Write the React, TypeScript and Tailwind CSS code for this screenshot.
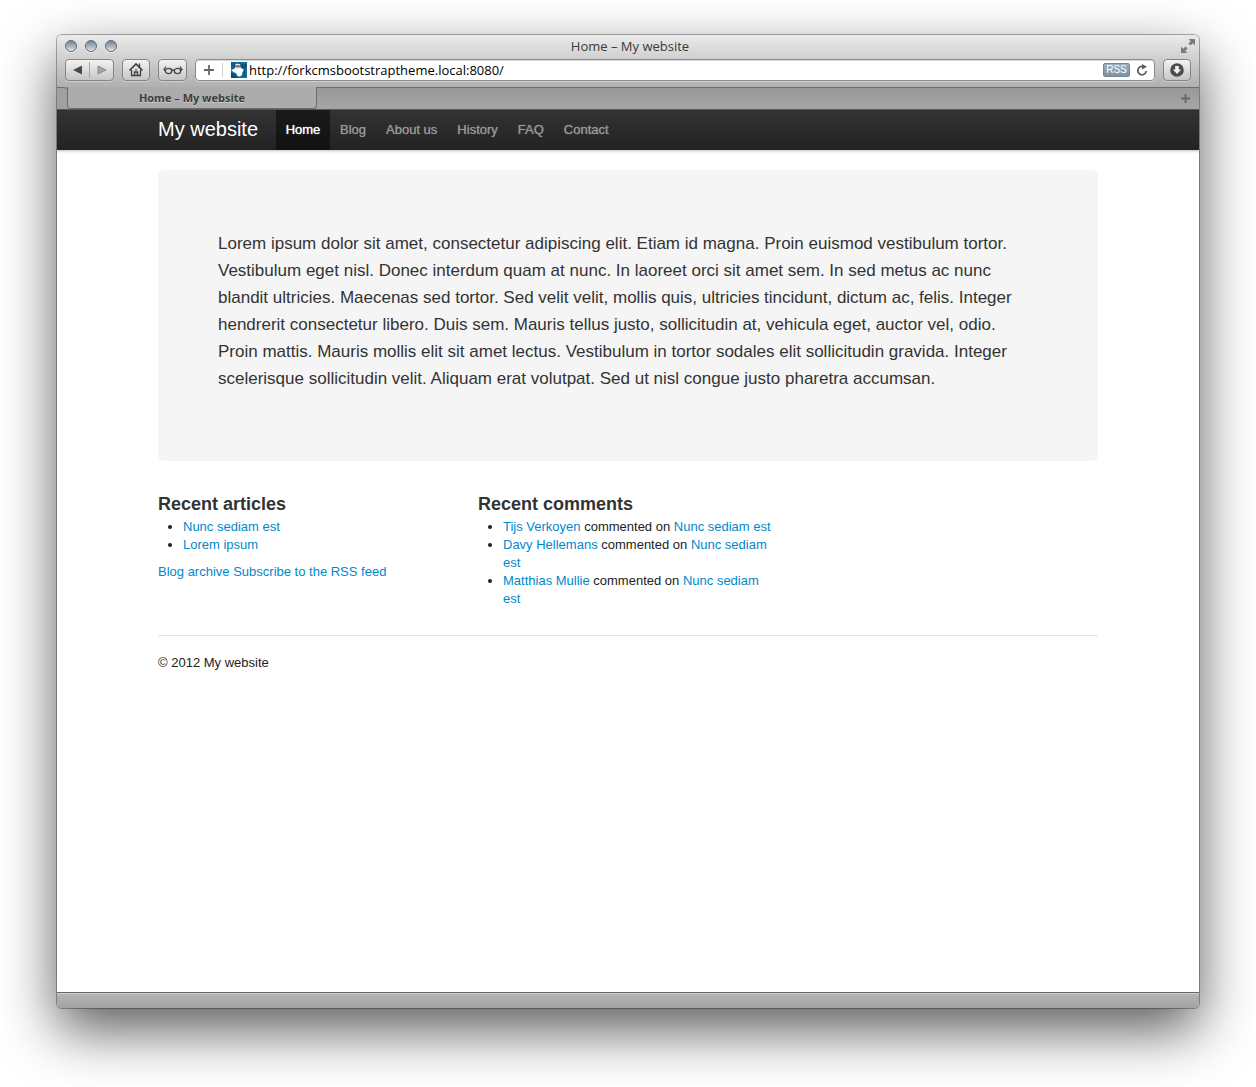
import type { ReactNode } from "react";

const SYSTEM_FONT = "font-['Lucida_Grande','Open_Sans',sans-serif]";

const toolButton =
  "flex h-[22px] items-center justify-center rounded-[4px] border border-[#858585] bg-linear-to-b from-[#f3f3f3] to-[#c6c6c6] shadow-[0_1px_0_rgba(255,255,255,0.35)]";

function WindowLight({ label }: { label: string }) {
  return (
    <button
      aria-label={label}
      className="size-3 rounded-full border border-[#626a72] bg-linear-to-b from-[#77838f] via-[#a4b0bb] to-[#dde8f0] shadow-[0_1px_0_rgba(255,255,255,0.6)]"
    />
  );
}

function ForkFavicon() {
  return (
    <svg width="16" height="16" viewBox="0 0 16 16" aria-hidden="true">
      <rect width="16" height="16" fill="#0a6c9f" />
      <path d="M0 0h4L2 4 0 7z" fill="#0c5e8a" />
      <path d="M2.500 4.500 4 2l3-1 3 1 1 2.500z" fill="#16304a" />
      <path d="M4 2.500 6 1.500 9 2l1 1.500H4z" fill="#dfeaf1" />
      <path d="M4 4.500h5.500v2H4z" fill="#e0aa90" />
      <path d="M0 8l3-1 1.500-1.500L7 6.500l3-1L11 7l2-.5v2L11.500 10l-.5 3-2 1.500L6.500 14 5 11 3 10.500z" fill="#fff" />
      <path d="M0 11l3 1 2 2 1 2H0z" fill="#064f78" />
      <path d="M11.500 2v3q0 1 1.500 1t1.500-1V2M13 2v12" stroke="#084a73" fill="none" />
    </svg>
  );
}

function TitleBar() {
  return (
    <div className="grid h-6 grid-cols-[1fr_auto_1fr] items-start pr-1 pl-2">
      <div className="flex gap-2 pt-[5px]">
        <WindowLight label="Close" />
        <WindowLight label="Minimize" />
        <WindowLight label="Zoom" />
      </div>
      <div className="text-[13px] leading-[22px] text-[#3a3a3a]">Home – My website</div>
      <button aria-label="Full screen" className="mt-1 justify-self-end">
        <svg width="14" height="14" viewBox="0 0 14 14" fill="#7b7b7b" aria-hidden="true">
          <path d="M7.500 0H14v6.500L11.800 4.300 9.500 6.600 7.400 4.500 9.700 2.200zM0 7.500 2.200 9.700 4.500 7.400 6.600 9.500 4.300 11.800 6.500 14H0z" />
        </svg>
      </button>
    </div>
  );
}

function Toolbar() {
  return (
    <div className="flex h-7 items-start px-2">
      <div className={`${toolButton} w-[49px]`}>
        <button aria-label="Back" className="flex h-full flex-1 items-center justify-center">
          <svg width="10" height="10" viewBox="0 0 10 10" aria-hidden="true">
            <path d="M0 5 9 0.500v9z" fill="#494949" />
          </svg>
        </button>
        <span className="h-4 w-px bg-[#a5a5a5]" />
        <button aria-label="Forward" className="flex h-full flex-1 items-center justify-center">
          <svg width="10" height="10" viewBox="0 0 10 10" aria-hidden="true">
            <path d="M9 5 1 1v8z" fill="#a5a5a5" stroke="#808080" strokeWidth="0.800" />
          </svg>
        </button>
      </div>
      <button aria-label="Home page" className={`${toolButton} ml-2 w-7`}>
        <svg width="16" height="16" viewBox="0 0 16 16" fill="none" stroke="#3d3d3d" aria-hidden="true">
          <path d="M1.500 8.500 8 2l6.500 6.500" strokeWidth="1.600" />
          <path d="M11.500 1.500v4M3.500 8v5.500h9V8" strokeWidth="1.300" />
          <path d="M8 7v1.500M6.500 13v-3h3v3" strokeWidth="1.300" />
        </svg>
      </button>
      <button aria-label="Reading list" className={`${toolButton} ml-2 w-[29px]`}>
        <svg width="20" height="10" viewBox="0 0 20 10" fill="none" stroke="#444" strokeWidth="1.300" aria-hidden="true">
          <ellipse cx="5.500" cy="6" rx="3.200" ry="2.600" />
          <ellipse cx="14.500" cy="6" rx="3.200" ry="2.600" />
          <path d="M8.500 5.500q1.500-1 3 0M2.300 5.500 1 4.500 3 1.500M17.700 5.500 19 4.500 17 1.500" />
        </svg>
      </button>
      <div className="ml-2 flex h-[22px] min-w-0 flex-1 items-center rounded-[4px] border border-[#8b8b8b] bg-white pr-1.5 pl-2 shadow-[inset_0_1px_1px_rgba(0,0,0,0.15),0_1px_0_rgba(255,255,255,0.35)]">
        <button aria-label="Add bookmark">
          <svg width="10" height="10" viewBox="0 0 10 10" stroke="#666" strokeWidth="1.800" aria-hidden="true">
            <path d="M5 0v10M0 5h10" />
          </svg>
        </button>
        <span className="mr-2 ml-2 h-[14px] w-px bg-[#cfcfcf]" />
        <ForkFavicon />
        <input
          type="text"
          aria-label="Address"
          defaultValue="http://forkcmsbootstraptheme.local:8080/"
          className="ml-0.5 h-5 min-w-0 flex-1 bg-transparent text-[13px] text-black outline-none"
        />
        <button className="h-[14px] w-[27px] rounded-[2px] border border-[#72889a] bg-linear-to-b from-[#9db0bf] to-[#7d93a4] font-['Liberation_Sans',sans-serif] text-[10px] leading-3 text-white">
          RSS
        </button>
        <button aria-label="Reload" className="ml-1.5">
          <svg width="12" height="12" viewBox="0 0 12 12" fill="none" aria-hidden="true">
            <path d="M7 2.500A4.200 4.200 0 1 0 10.200 7" stroke="#5c5c5c" strokeWidth="1.700" />
            <path d="M6 0l5 2.700L6 5.500z" fill="#5c5c5c" />
          </svg>
        </button>
      </div>
      <button aria-label="Downloads" className={`${toolButton} ml-2 w-7`}>
        <svg width="14" height="14" viewBox="0 0 14 14" aria-hidden="true">
          <circle cx="7" cy="7" r="6.800" fill="#4b4b4b" />
          <path d="M5.200 3h3.600v3.500h2.400L7 11 2.800 6.500h2.400z" fill="#f0f0f0" />
        </svg>
      </button>
    </div>
  );
}

function TabBar() {
  return (
    <div className="flex h-[23px] border-b border-[#5c5c5c] bg-[#a0a0a0]">
      <div className="w-[10px] rounded-tr-[4px] border-t border-[#6c6c6c] bg-[#a0a0a0]" />
      <button className="w-[250px] rounded-b-[4px] border-r border-b border-l border-[#6c6c6c] bg-[#acacac] text-center text-[11px] leading-[21px] font-bold text-[#3c3c3c] [text-shadow:0_1px_0_rgba(255,255,255,0.4)]">
        Home – My website
      </button>
      <div className="flex flex-1 items-center justify-end border-t border-[#6c6c6c] bg-linear-to-b from-[#989898] to-[#a6a6a6] pr-[9px]">
        <button aria-label="New tab">
          <svg width="9" height="9" viewBox="0 0 9 9" stroke="#676767" strokeWidth="1.800" aria-hidden="true">
            <path d="M4.500 0v9M0 4.500h9" />
          </svg>
        </button>
      </div>
    </div>
  );
}

const pages = ["Blog", "About us", "History", "FAQ", "Contact"];

function SiteNav() {
  return (
    <nav className="relative h-10 bg-linear-to-b from-[#333] to-[#222] px-5 shadow-[0_1px_3px_rgba(0,0,0,0.25)]">
      <div className="mx-auto flex max-w-[940px] leading-10">
        <a href="#" className="w-[118px] shrink-0 text-[20px] leading-[38px] whitespace-nowrap text-white">
          My website
        </a>
        <a
          href="#"
          aria-current="page"
          className="h-10 w-[54px] bg-linear-to-b from-[#1b1b1b] to-[#111] text-center text-[13px] text-white [text-shadow:0_0_1px_#fff]"
        >
          Home
        </a>
        {pages.map((page) => (
          <a
            key={page}
            href="#"
            className="px-[10px] text-[13px] whitespace-nowrap text-[#999] [text-shadow:0_0_1px_#888]"
          >
            {page}
          </a>
        ))}
      </div>
    </nav>
  );
}

function TextLink({ children }: { children: ReactNode }) {
  return (
    <a href="#" className="text-[#0088cc]">
      {children}
    </a>
  );
}

const articles = ["Nunc sediam est", "Lorem ipsum"];
const commenters = ["Tijs Verkoyen", "Davy Hellemans", "Matthias Mullie"];

function Content() {
  return (
    <main className="mx-auto w-full max-w-[980px] flex-1 px-5 pt-5 text-[13px] leading-[18px] text-[#222]">
      <section className="mb-[30px] rounded-[6px] bg-[#f5f5f5] p-[60px] text-[17px] leading-[27px] text-[#333]">
        <p className="mb-[9px] pr-2">
          Lorem ipsum dolor sit amet, consectetur adipiscing elit. Etiam id magna. Proin euismod
          vestibulum tortor. Vestibulum eget nisl. Donec interdum quam at nunc. In laoreet orci sit
          amet sem. In sed metus ac nunc blandit ultricies. Maecenas sed tortor. Sed velit velit,
          mollis quis, ultricies tincidunt, dictum ac, felis. Integer hendrerit consectetur libero.
          Duis sem. Mauris tellus justo, sollicitudin at, vehicula eget, auctor vel, odio. Proin
          mattis. Mauris mollis elit sit amet lectus. Vestibulum in tortor sodales elit sollicitudin
          gravida. Integer scelerisque sollicitudin velit. Aliquam erat volutpat. Sed ut nisl congue
          justo pharetra accumsan.
        </p>
      </section>
      <div className="grid grid-cols-3 gap-5">
        <section>
          <h3 className="text-[18px] leading-[27px] font-bold text-[#333]">Recent articles</h3>
          <ul className="mb-[9px] ml-[25px] list-disc">
            {articles.map((title) => (
              <li key={title}>
                <TextLink>{title}</TextLink>
              </li>
            ))}
          </ul>
          <p>
            <TextLink>Blog archive</TextLink> <TextLink>Subscribe to the RSS feed</TextLink>
          </p>
        </section>
        <section>
          <h3 className="text-[18px] leading-[27px] font-bold text-[#333]">Recent comments</h3>
          <ul className="mb-[9px] ml-[25px] list-disc">
            {commenters.map((name) => (
              <li key={name}>
                <TextLink>{name}</TextLink> commented on <TextLink>Nunc sediam est</TextLink>
              </li>
            ))}
          </ul>
        </section>
      </div>
      <footer className="mt-[18px] border-t border-[#e5e5e5] pt-[18px]">
        <p>© 2012 My website</p>
      </footer>
    </main>
  );
}

export default function App() {
  return (
    <div className="flex min-h-screen flex-col bg-white px-[57px] pt-[35px] pb-[79px] font-['Liberation_Sans',sans-serif]">
      <div className="flex flex-1 flex-col overflow-hidden rounded-[5px] bg-white shadow-[0_0_0_1px_rgba(0,0,0,0.3),0_22px_56px_rgba(0,0,0,0.65)]">
        <header className={SYSTEM_FONT}>
          <div className="bg-linear-to-b from-[#ebebeb] to-[#b0b0b0]">
            <TitleBar />
            <Toolbar />
          </div>
          <TabBar />
        </header>
        <SiteNav />
        <Content />
        <div className="h-4 border-t border-[#666] bg-linear-to-b from-[#b5b5b5] to-[#a2a2a2] shadow-[inset_0_1px_0_#d0d0d0]" />
      </div>
    </div>
  );
}
